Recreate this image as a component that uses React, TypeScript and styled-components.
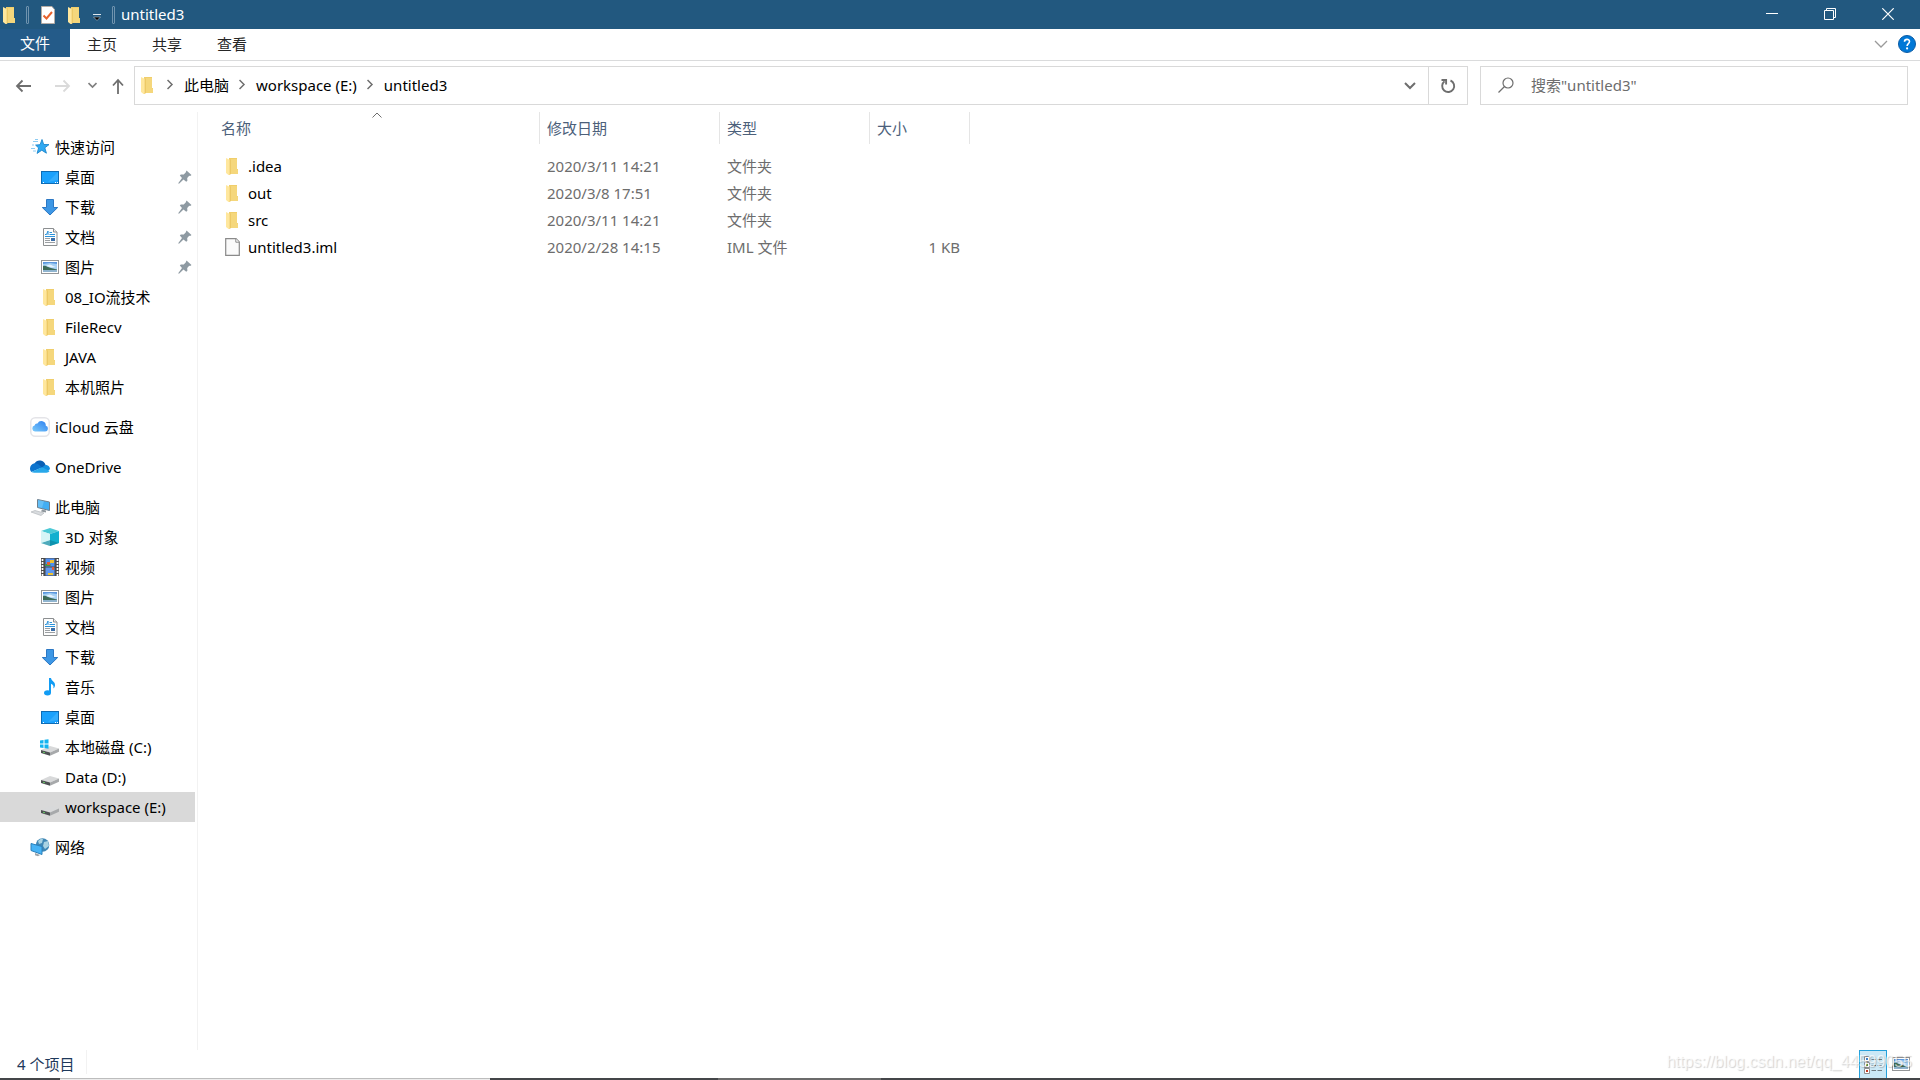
import React from "react";
import styled, { createGlobalStyle } from "styled-components";

const Global = createGlobalStyle`
  * { box-sizing: border-box; }
  html, body, #root { height: 100%; }
  body {
    margin: 0;
    background: #fff;
    color: #000;
    font-family: "Noto Sans", "Noto Sans CJK SC", sans-serif;
    font-size: 15px;
    line-height: 20px;
    overflow: hidden;
  }
  button, input { font: inherit; color: inherit; border: 0; background: none; padding: 0; margin: 0; }
  a { color: inherit; text-decoration: none; }
  ul, ol { list-style: none; margin: 0; padding: 0; }
  svg { display: block; flex: none; }
`;

const Window = styled.div`
  display: flex;
  flex-direction: column;
  height: 100vh;
`;

const TitleBar = styled.header`
  display: flex;
  align-items: center;
  height: 29px;
  flex: none;
  background: #22587f;
  color: #fff;
`;

const QuickTools = styled.div`
  display: flex;
  align-items: center;
  padding-left: 1px;
`;

const ToolButton = styled.button<{ $gap?: number }>`
  display: flex;
  margin-left: ${(p) => p.$gap ?? 0}px;
`;

const Divider = styled.span<{ $gap: number }>`
  width: 3px;
  height: 18px;
  margin-left: ${(p) => p.$gap}px;
  border: 1px solid #6f93ae;
  border-radius: 1px;
`;

const Title = styled.h1`
  margin: 0 0 0 6px;
  padding-bottom: 2px;
  font-size: 15px;
  line-height: 20px;
  font-weight: 400;
  flex: 1;
`;

const WindowButton = styled.button`
  display: flex;
  align-items: center;
  justify-content: center;
  width: 58px;
  height: 28px;
`;

const WindowButtons = styled.div`
  display: flex;
  align-self: flex-start;
  padding-right: 3px;
`;

const Ribbon = styled.nav`
  display: flex;
  align-items: flex-start;
  height: 32px;
  flex: none;
  border-bottom: 1px solid #dadbdc;
  color: #262626;
`;

const FileTab = styled.button`
  width: 70px;
  height: 28px;
  padding-bottom: 1px;
  background: #245b89;
  color: #fff;
`;

const Tab = styled.button`
  width: 65px;
  height: 29px;
  padding-left: 17px;
  text-align: left;
`;

const RibbonEnd = styled.div`
  display: flex;
  align-items: center;
  gap: 10px;
  height: 30px;
  margin-left: auto;
  padding-right: 4px;
`;

const NavBar = styled.div`
  display: flex;
  align-items: center;
  flex: none;
  padding: 5px 12px 0 0;
`;

const NavButtons = styled.div`
  display: flex;
  align-items: center;
  width: 134px;
  padding-left: 15px;
`;

const Address = styled.div`
  display: flex;
  flex: 1;
  height: 39px;
  border: 1px solid #d9d9d9;
`;

const Crumbs = styled.ol`
  display: flex;
  align-items: center;
  flex: 1;
  padding: 0 0 2px 4px;
`;

const Crumb = styled.li`
  display: flex;
  align-items: center;
`;

const CrumbArrow = styled.svg`
  width: 7px;
  height: 11px;
  margin: 0 10px 0 10px;
`;

const AddressButton = styled.button<{ $line?: boolean }>`
  display: flex;
  align-items: center;
  justify-content: center;
  width: ${(p) => (p.$line ? 39 : 36)}px;
  border-left: ${(p) => (p.$line ? "1px solid #d9d9d9" : "0")};
`;

const Search = styled.label`
  display: flex;
  align-items: center;
  gap: 17px;
  width: 428px;
  height: 39px;
  margin-left: 12px;
  padding: 0 0 2px 17px;
  border: 1px solid #d9d9d9;
`;

const SearchInput = styled.input`
  flex: 1;
  outline: 0;
  &::placeholder { color: #6d6d6d; opacity: 1; }
`;

const Body = styled.div`
  display: flex;
  flex: 1;
  min-height: 0;
  padding-top: 7px;
`;

const Sidebar = styled.aside`
  width: 198px;
  flex: none;
  padding: 20px 2px 0 0;
  border-right: 1px solid #f2f2f2;
`;

const Group = styled.ul`
  margin-bottom: 10px;
`;

const TreeLink = styled.a<{ $child?: boolean; $active?: boolean }>`
  display: flex;
  align-items: center;
  gap: 5px;
  height: 30px;
  padding: 0 3px 0 ${(p) => (p.$child ? 40 : 30)}px;
  background: ${(p) => (p.$active ? "#d9d9d9" : "transparent")};
`;

const TreeLabel = styled.span`
  flex: 1;
  white-space: nowrap;
`;

const Files = styled.main`
  flex: 1;
`;

const Table = styled.table`
  table-layout: fixed;
  width: 772px;
  border-collapse: separate;
  border-spacing: 0;
`;

const HeadCell = styled.th`
  height: 32px;
  padding: 0 0 0 7px;
  border-right: 1px solid #e5e5e5;
  color: #4c607a;
  font-weight: 400;
  text-align: left;
  &:first-child { padding-left: 23px; }
`;

const HeadInner = styled.div`
  position: relative;
`;

const SortMark = styled.svg`
  position: absolute;
  left: 151px;
  top: -6px;
`;

const Spacer = styled.tr`
  height: 8px;
`;

const Cell = styled.td<{ $right?: boolean }>`
  height: 27px;
  padding: 0 10px 0 7px;
  color: #6d6d6d;
  text-align: ${(p) => (p.$right ? "right" : "left")};
`;

const NameCell = styled.td`
  height: 27px;
  padding: 0 0 0 26px;
`;

const FileName = styled.span`
  display: flex;
  align-items: center;
  gap: 6px;
`;

const StatusBar = styled.footer`
  display: flex;
  align-items: flex-start;
  justify-content: space-between;
  height: 28px;
  flex: none;
  color: #1e395b;
`;

const Count = styled.span`
  height: 24px;
  padding: 4px 12px 0 17px;
  border-right: 1px solid #f2f2f2;
`;

const Views = styled.div`
  display: flex;
  position: relative;
  padding-right: 5px;
`;

const ViewButton = styled.button<{ $active?: boolean }>`
  display: flex;
  align-items: center;
  justify-content: center;
  width: 28px;
  height: 28px;
  border: ${(p) => (p.$active ? "1px solid #26a0da" : "0")};
  border-bottom: 0;
  background: ${(p) => (p.$active ? "#cbe8f6" : "transparent")};
`;

const Watermark = styled.span`
  position: absolute;
  right: 8px;
  top: 2px;
  font: 16px/20px "Liberation Sans", Arial, sans-serif;
  color: rgba(255, 255, 255, 0.7);
  text-shadow: 1px 1px 1px rgba(0, 0, 0, 0.18);
  white-space: nowrap;
  pointer-events: none;
`;

const Edge = styled.div`
  display: flex;
  height: 2px;
  flex: none;
  background: #444649;
`;

const EdgePart = styled.span<{ $width: number; $tone: string; $top?: string }>`
  width: ${(p) => p.$width}px;
  background: ${(p) => p.$tone};
  border-top: 1px solid ${(p) => p.$top ?? p.$tone};
`;

const FolderIcon = () => (
  <svg width="18" height="18" viewBox="-1 -1 18 18">
    <path d="M4 0h8v11h1v5H4z" fill="#f0ce6b" />
    <path d="M6 1h6v10l1 1v4H6z" fill="#f5d77c" />
    <path d="M1 0l4 2v15L3.500 17 1 15z" fill="#ffe79d" />
    <path d="M5 2v15" stroke="#e6bf5c" strokeWidth=".6" />
  </svg>
);

const FileIcon = () => (
  <svg width="18" height="18" viewBox="-1 0 18 18">
    <path d="M.7.600h10.300L14.300 4v13.400H.7z" fill="#fafafa" stroke="#8a8a8a" strokeWidth="1.200" />
    <path d="M10.800.700V4.200h3.400" fill="#fff" stroke="#8a8a8a" />
  </svg>
);

const StarIcon = () => (
  <svg width="20" height="18" viewBox="0 0 20 18">
    <path d="M12 1.500l1.700 5 5.300.1-4.200 3.200 1.600 5.400-4.600-3-4.700 3.200 1.500-5.500-3-2.800 4.500-.4z" fill="#2fa9f2" stroke="#1c86cc" strokeWidth=".9" />
    <path d="M3 3.500h5M5 1.500h3M1 10.500h4M3 13h3M2 7h2" stroke="#8ccbf2" />
  </svg>
);

const DesktopIcon = () => (
  <svg width="20" height="18" viewBox="0 0 20 18">
    <rect x="1.500" y="3.500" width="17" height="12" fill="#1aa1fd" stroke="#0e6cb5" />
    <path d="M18 4v8L8 14z" fill="#45b5ff" opacity=".6" />
    <path d="M3 14.500h1m11 0h1m1 0h1" stroke="#fff" />
  </svg>
);

const DownloadIcon = () => (
  <svg width="20" height="18" viewBox="0 0 20 18">
    <path d="M6.500 1.500h7v8h4.200L10 17 2.300 9.500h4.200z" fill="#3d97e5" stroke="#2c78c4" />
  </svg>
);

const DocumentIcon = () => (
  <svg width="20" height="18" viewBox="0 0 20 18">
    <path d="M3.500.500h10L17 4v13.500H3.500z" fill="#fdfdfd" stroke="#8c8f91" />
    <path d="M13.500.500V4H17" fill="#eee" stroke="#8c8f91" />
    <path d="M5 6.500h1.500l1.500-3.500v4M9.500 4.500H12M9.500 6.500H15M5 8.500h10" stroke="#2a92da" fill="none" />
    <path d="M5 10.500h5M5 12.500h5M5 14.500h10" stroke="#9b9fa3" />
    <rect x="11" y="10" width="4" height="3" fill="#3b6ea8" />
  </svg>
);

const PictureIcon = () => (
  <svg width="20" height="18" viewBox="0 0 20 18">
    <rect x="1.500" y="2.500" width="17" height="13" fill="#fff" stroke="#949698" />
    <rect x="3" y="4" width="14" height="10" fill="#a5cff3" />
    <path d="M3 4h14v2L10 5 3 6z" fill="#5b97dd" />
    <path d="M3 8c3-1 5 1.500 8 2l6 1.500v1H3z" fill="#3e6b58" />
    <path d="M3 12h14v2H3z" fill="#8fb4cf" />
    <path d="M6 8q4-3 7 0l3 1-4 .5z" fill="#e6f2fb" />
  </svg>
);

const CloudIcon = () => (
  <svg width="20" height="20" viewBox="0 0 20 20">
    <defs>
      <linearGradient id="cloud" x1="0" y1="1" x2="1" y2="0">
        <stop offset="0" stopColor="#7ccbfa" />
        <stop offset="1" stopColor="#2c7ff0" />
      </linearGradient>
    </defs>
    <rect x=".75" y=".75" width="18.500" height="18.500" rx="4.500" fill="#fff" stroke="#e4e4e8" strokeWidth="1.500" />
    <path d="M5 14.500a3 3 0 01-.4-5.900 2.600 2.600 0 012.900-2.100 4.400 4.400 0 018.300 2.300 2.900 2.900 0 01-.7 5.700z" fill="url(#cloud)" />
  </svg>
);

const OneDriveIcon = () => (
  <svg width="20" height="18" viewBox="0 0 20 18">
    <path d="M4.500 5.500a6 6 0 0111 1.500l-4 5z" fill="#0a5fb4" />
    <path d="M4.500 5.200C1.500 5.700 0 8 0 10.500c0 1.300.5 2.600 1.400 3.500L12 9.500 8 6a5 5 0 00-3.500-.8z" fill="#0c74ce" />
    <path d="M12 9.500l3.500-2.700c2.400.1 4.500 2 4.500 4.200L17 14z" fill="#1490df" />
    <path d="M1.400 14L12 9.300l7.500 3.700c-.6 1-1.700 1.700-3 1.700H4.500c-1.300 0-2.300-.3-3.100-.7z" fill="#28a8ea" />
  </svg>
);

const ComputerIcon = () => (
  <svg width="20" height="20" viewBox="0 0 20 20">
    <path d="M7.500 2.500l12 2.500v8.500l-12-3z" fill="#42aef4" stroke="#6f7f8c" />
    <path d="M8 3l6 1.300-2 6.700-4-1z" fill="#7ccaf8" opacity=".6" />
    <path d="M12 12.500l4 1v2l-5-1z" fill="#8f979d" />
    <path d="M1 15l4-1.500L14 16l-3 2.500z" fill="#d9dcdf" stroke="#b4b9bd" strokeWidth=".7" />
  </svg>
);

const CubeIcon = () => (
  <svg width="20" height="18" viewBox="0 0 20 18">
    <path d="M1 3l9-3 9 3-9 3z" fill="#4cc9d6" />
    <path d="M1 3l9 3v12l-9-3z" fill="#b4ecf0" />
    <path d="M19 3l-9 3v12l9-3z" fill="#12b0cf" />
    <path d="M1 15l9-3 9 3-9 3z" fill="#0c7f97" opacity=".6" />
    <path d="M1 3l9 3v6l-9 3z" fill="#d6f5f7" />
  </svg>
);

const VideoIcon = () => (
  <svg width="20" height="20" viewBox="0 0 20 20">
    <rect x="1" y="1" width="18" height="18" fill="#4b4b4b" />
    <rect x="5.500" y="1.500" width="9" height="8" fill="#4f8ff0" />
    <rect x="5.500" y="10.500" width="9" height="8" fill="#5f97ee" />
    <path d="M2.500 2v17M17.500 2v17" stroke="#fff" strokeWidth="1.700" strokeDasharray="2 1" />
    <path d="M10 3h4v3h-4zM8 16h5v2H8z" fill="#efc22f" />
    <path d="M5.500 7h5v2h-5z" fill="#3ca03d" />
    <path d="M7 5h3v3H7zM12 10h2v3h-2z" fill="#e35d34" />
  </svg>
);

const MusicIcon = () => (
  <svg width="20" height="18" viewBox="0 0 20 18">
    <ellipse cx="7.500" cy="14.800" rx="3.500" ry="2.600" fill="#119cf4" />
    <path d="M9 0h2c.3 3 4.500 3.500 4 7.500-.2 1.500-1 2.500-1.700 3 .8-2.500-.3-4-2.300-4.700V15H9z" fill="#119cf4" />
  </svg>
);

const DriveShape = () => (
  <>
    <path d="M1 11l9-4 9 2.500-9 4z" fill="#d8d9da" />
    <path d="M1 11l9 2.500v3.300L1 14z" fill="#4d5052" />
    <path d="M10 13.500l9-4v3.300l-9 4z" fill="#a7a9ab" />
    <path d="M3 13.200l2 .6" stroke="#6bd06a" />
  </>
);

const DriveIcon = () => (
  <svg width="20" height="20" viewBox="0 0 20 20">
    <g transform="translate(0 2)"><DriveShape /></g>
  </svg>
);

const SystemDriveIcon = () => (
  <svg width="20" height="18" viewBox="0 0 20 18">
    <g transform="translate(0 1)"><DriveShape /></g>
    <path d="M0 2.500l3.500-.5v3.500H0zM4.500 1.800l4-.6v4.300h-4zM0 6.500h3.500V10L0 9.500zM4.500 6.500h4v4.200l-4-.6z" fill="#14b4f0" />
  </svg>
);

const NetworkIcon = () => (
  <svg width="20" height="20" viewBox="0 0 20 20">
    <circle cx="12.500" cy="8" r="6.800" fill="#3f87b5" />
    <path d="M8 4q3-3 5-2l-1 4-3 1zM14 5l4-1 1 5-4 3-2-3z" fill="#a9d3e3" />
    <path d="M1 6.500l11 3v8l-11-4z" fill="#47b3f5" stroke="#2a80bb" />
    <path d="M5 16l5 2-2 1.200-3-1z" fill="#9ba3a9" />
  </svg>
);

const PinIcon = () => (
  <svg width="14" height="14" viewBox="0 0 14 14">
    <path d="M8.500.500L13.500 5l-1.300 1-1-.2-2 2.300.2 2.700-1.200 1L5.500 9.500 1 13.700l-.8-.5L4 8 1.800 5.500l1-1.100 2.900.2 2-2z" fill="#8e9aa2" />
  </svg>
);

type Node = { label: string; icon: () => React.JSX.Element; pin?: boolean; active?: boolean };

const groups: Node[][] = [
  [
    { label: "快速访问", icon: StarIcon },
    { label: "桌面", icon: DesktopIcon, pin: true },
    { label: "下载", icon: DownloadIcon, pin: true },
    { label: "文档", icon: DocumentIcon, pin: true },
    { label: "图片", icon: PictureIcon, pin: true },
    { label: "08_IO流技术", icon: FolderIcon },
    { label: "FileRecv", icon: FolderIcon },
    { label: "JAVA", icon: FolderIcon },
    { label: "本机照片", icon: FolderIcon },
  ],
  [{ label: "iCloud 云盘", icon: CloudIcon }],
  [{ label: "OneDrive", icon: OneDriveIcon }],
  [
    { label: "此电脑", icon: ComputerIcon },
    { label: "3D 对象", icon: CubeIcon },
    { label: "视频", icon: VideoIcon },
    { label: "图片", icon: PictureIcon },
    { label: "文档", icon: DocumentIcon },
    { label: "下载", icon: DownloadIcon },
    { label: "音乐", icon: MusicIcon },
    { label: "桌面", icon: DesktopIcon },
    { label: "本地磁盘 (C:)", icon: SystemDriveIcon },
    { label: "Data (D:)", icon: DriveIcon },
    { label: "workspace (E:)", icon: DriveIcon, active: true },
  ],
  [{ label: "网络", icon: NetworkIcon }],
];

const IconBox = styled.span`
  display: flex;
  justify-content: center;
  width: 20px;
`;

const files = [
  { name: ".idea", date: "2020/3/11 14:21", type: "文件夹", size: "", folder: true },
  { name: "out", date: "2020/3/8 17:51", type: "文件夹", size: "", folder: true },
  { name: "src", date: "2020/3/11 14:21", type: "文件夹", size: "", folder: true },
  { name: "untitled3.iml", date: "2020/2/28 14:15", type: "IML 文件", size: "1 KB", folder: false },
];

export default function App() {
  return (
    <Window>
      <Global />
      <TitleBar>
        <QuickTools>
          <FolderIcon />
          <Divider $gap={7} />
          <ToolButton $gap={9} aria-label="属性">
            <svg width="20" height="18" viewBox="0 0 20 18">
              <path d="M3.500.500H14l2.500 3v14h-13z" fill="#fff" stroke="#b5aca5" />
              <path d="M5.500 9.500l3 3 5.500-6.500" fill="none" stroke="#e8622c" strokeWidth="2" />
            </svg>
          </ToolButton>
          <ToolButton $gap={8} aria-label="新建文件夹"><FolderIcon /></ToolButton>
          <ToolButton $gap={9} aria-label="自定义快速访问工具栏">
            <svg width="8" height="12" viewBox="0 0 8 12">
              <path d="M0 5.500h8" stroke="#dfe8ee" />
              <path d="M.5 8h7L4 11.500z" fill="#000" stroke="#b8c8d4" strokeWidth=".6" />
            </svg>
          </ToolButton>
          <Divider $gap={11} />
        </QuickTools>
        <Title>untitled3</Title>
        <WindowButtons>
          <WindowButton aria-label="最小化">
            <svg width="12" height="12"><path d="M0 5.500h12" stroke="#fff" /></svg>
          </WindowButton>
          <WindowButton aria-label="还原">
            <svg width="12" height="12" fill="none" stroke="#fff"><path d="M.5 2.500h9v9h-9zM2.500 2.500v-2h9v9h-2" /></svg>
          </WindowButton>
          <WindowButton aria-label="关闭">
            <svg width="12" height="12" stroke="#fff" strokeWidth="1.200"><path d="M.3.300l11.400 11.400M11.700.300L.3 11.700" /></svg>
          </WindowButton>
        </WindowButtons>
      </TitleBar>

      <Ribbon>
        <FileTab>文件</FileTab>
        <Tab>主页</Tab>
        <Tab>共享</Tab>
        <Tab>查看</Tab>
        <RibbonEnd>
          <ToolButton aria-label="展开功能区">
            <svg width="14" height="8" fill="none" stroke="#9a9a9a" strokeWidth="1.300"><path d="M1 1l6 6 6-6" /></svg>
          </ToolButton>
          <ToolButton aria-label="帮助">
            <svg width="18" height="18" viewBox="0 0 18 18">
              <circle cx="9" cy="9" r="8.500" fill="#0078d7" stroke="#0c5ca5" />
              <path d="M6.500 6.800c0-3.200 5-3.200 5-.2 0 2-2.400 2-2.400 4.300" fill="none" stroke="#fff" strokeWidth="1.600" />
              <circle cx="9.100" cy="13.400" r="1.100" fill="#fff" />
            </svg>
          </ToolButton>
        </RibbonEnd>
      </Ribbon>

      <NavBar>
        <NavButtons>
          <ToolButton aria-label="后退">
            <svg width="16" height="14" fill="none" stroke="#6e6e6e" strokeWidth="1.800"><path d="M16 7H2M7.500 1.500L2 7l5.500 5.500" /></svg>
          </ToolButton>
          <ToolButton $gap={24} aria-label="前进">
            <svg width="16" height="14" fill="none" stroke="#dadada" strokeWidth="1.800"><path d="M0 7h14M8.500 1.500L14 7l-5.500 5.500" /></svg>
          </ToolButton>
          <ToolButton $gap={17} aria-label="最近浏览的位置">
            <svg width="9" height="7" fill="none" stroke="#808080" strokeWidth="1.700"><path d="M.5 1l4 4 4-4" /></svg>
          </ToolButton>
          <ToolButton $gap={15} aria-label="上移">
            <svg width="12" height="16" fill="none" stroke="#6e6e6e" strokeWidth="1.800"><path d="M6 16V2M1 7.500L6 2l5 5.500" /></svg>
          </ToolButton>
        </NavButtons>
        <Address>
          <Crumbs>
            <FolderIcon />
            {["此电脑", "workspace (E:)", "untitled3"].map((c) => (
              <Crumb key={c}>
                <CrumbArrow viewBox="0 0 7 11" fill="none" stroke="#6e6e6e" strokeWidth="1.500"><path d="M.5 1L5 5.500.5 10" /></CrumbArrow>
                <a href="#">{c}</a>
              </Crumb>
            ))}
          </Crumbs>
          <AddressButton aria-label="以前的位置">
            <svg width="12" height="8" fill="none" stroke="#6e6e6e" strokeWidth="2"><path d="M1 1l5 5 5-5" /></svg>
          </AddressButton>
          <AddressButton $line aria-label="刷新">
            <svg width="16" height="16" fill="none" stroke="#6e6e6e" strokeWidth="1.900">
              <path d="M10.500 2.500a6 6 0 11-6 .8M1.500 2h4.600v4.600" />
            </svg>
          </AddressButton>
        </Address>
        <Search>
          <svg width="16" height="16" fill="none" stroke="#6e6e6e" strokeWidth="1.200"><circle cx="10" cy="6" r="5" /><path d="M6.500 9.500L.5 15.500" /></svg>
          <SearchInput type="text" placeholder={'搜索"untitled3"'} aria-label="搜索" />
        </Search>
      </NavBar>

      <Body>
        <Sidebar>
          {groups.map((group, g) => (
            <Group key={g}>
              {group.map(({ label, icon: Icon, pin, active }, i) => (
                <li key={label}>
                  <TreeLink href="#" $child={i > 0} $active={active}>
                    <IconBox><Icon /></IconBox>
                    <TreeLabel>{label}</TreeLabel>
                    {pin && <PinIcon />}
                  </TreeLink>
                </li>
              ))}
            </Group>
          ))}
        </Sidebar>
        <Files>
          <Table>
            <colgroup>
              <col width="342" /><col width="180" /><col width="150" /><col width="100" />
            </colgroup>
            <thead>
              <tr>
                <HeadCell>
                  <HeadInner>
                    名称
                    <SortMark width="10" height="6" fill="none" stroke="#6e6e6e"><path d="M.5 5.500L5 1l4.500 4.500" /></SortMark>
                  </HeadInner>
                </HeadCell>
                <HeadCell>修改日期</HeadCell>
                <HeadCell>类型</HeadCell>
                <HeadCell>大小</HeadCell>
              </tr>
            </thead>
            <tbody>
              <Spacer />
              {files.map((f) => (
                <tr key={f.name}>
                  <NameCell><FileName>{f.folder ? <FolderIcon /> : <FileIcon />}{f.name}</FileName></NameCell>
                  <Cell>{f.date}</Cell>
                  <Cell>{f.type}</Cell>
                  <Cell $right>{f.size}</Cell>
                </tr>
              ))}
            </tbody>
          </Table>
        </Files>
      </Body>

      <StatusBar>
        <Count>4 个项目</Count>
        <Views>
          <ViewButton $active aria-label="详细信息">
            <svg width="18" height="18" viewBox="0 0 18 18">
              <g fill="#fff" stroke="#8d8f91"><path d="M.5.500h5v5h-5zM.5 6.500h5v5h-5zM.5 12.500h5v5h-5z" /></g>
              <path d="M2 3h2" stroke="#3f7fc4" strokeWidth="2" />
              <path d="M2 9h2" stroke="#5a9a45" strokeWidth="2" />
              <path d="M2 15h2" stroke="#c23a22" strokeWidth="2" />
              <path d="M7.500 3.500H12m1.500 0H18M7.500 9.500H12m1.500 0H18M7.500 14.500H12m1.500 0H18" stroke="#6f7a80" />
            </svg>
          </ViewButton>
          <ViewButton aria-label="大缩略图"><PictureIcon /></ViewButton>
          <Watermark>https://blog.csdn.net/qq_44599055</Watermark>
        </Views>
      </StatusBar>
      <Edge>
        <EdgePart $width={60} $tone="#444649" />
        <EdgePart $width={430} $tone="#ececec" $top="#bdbdbd" />
        <EdgePart $width={228} $tone="#444649" />
        <EdgePart $width={163} $tone="#6b6b6b" />
      </Edge>
    </Window>
  );
}
